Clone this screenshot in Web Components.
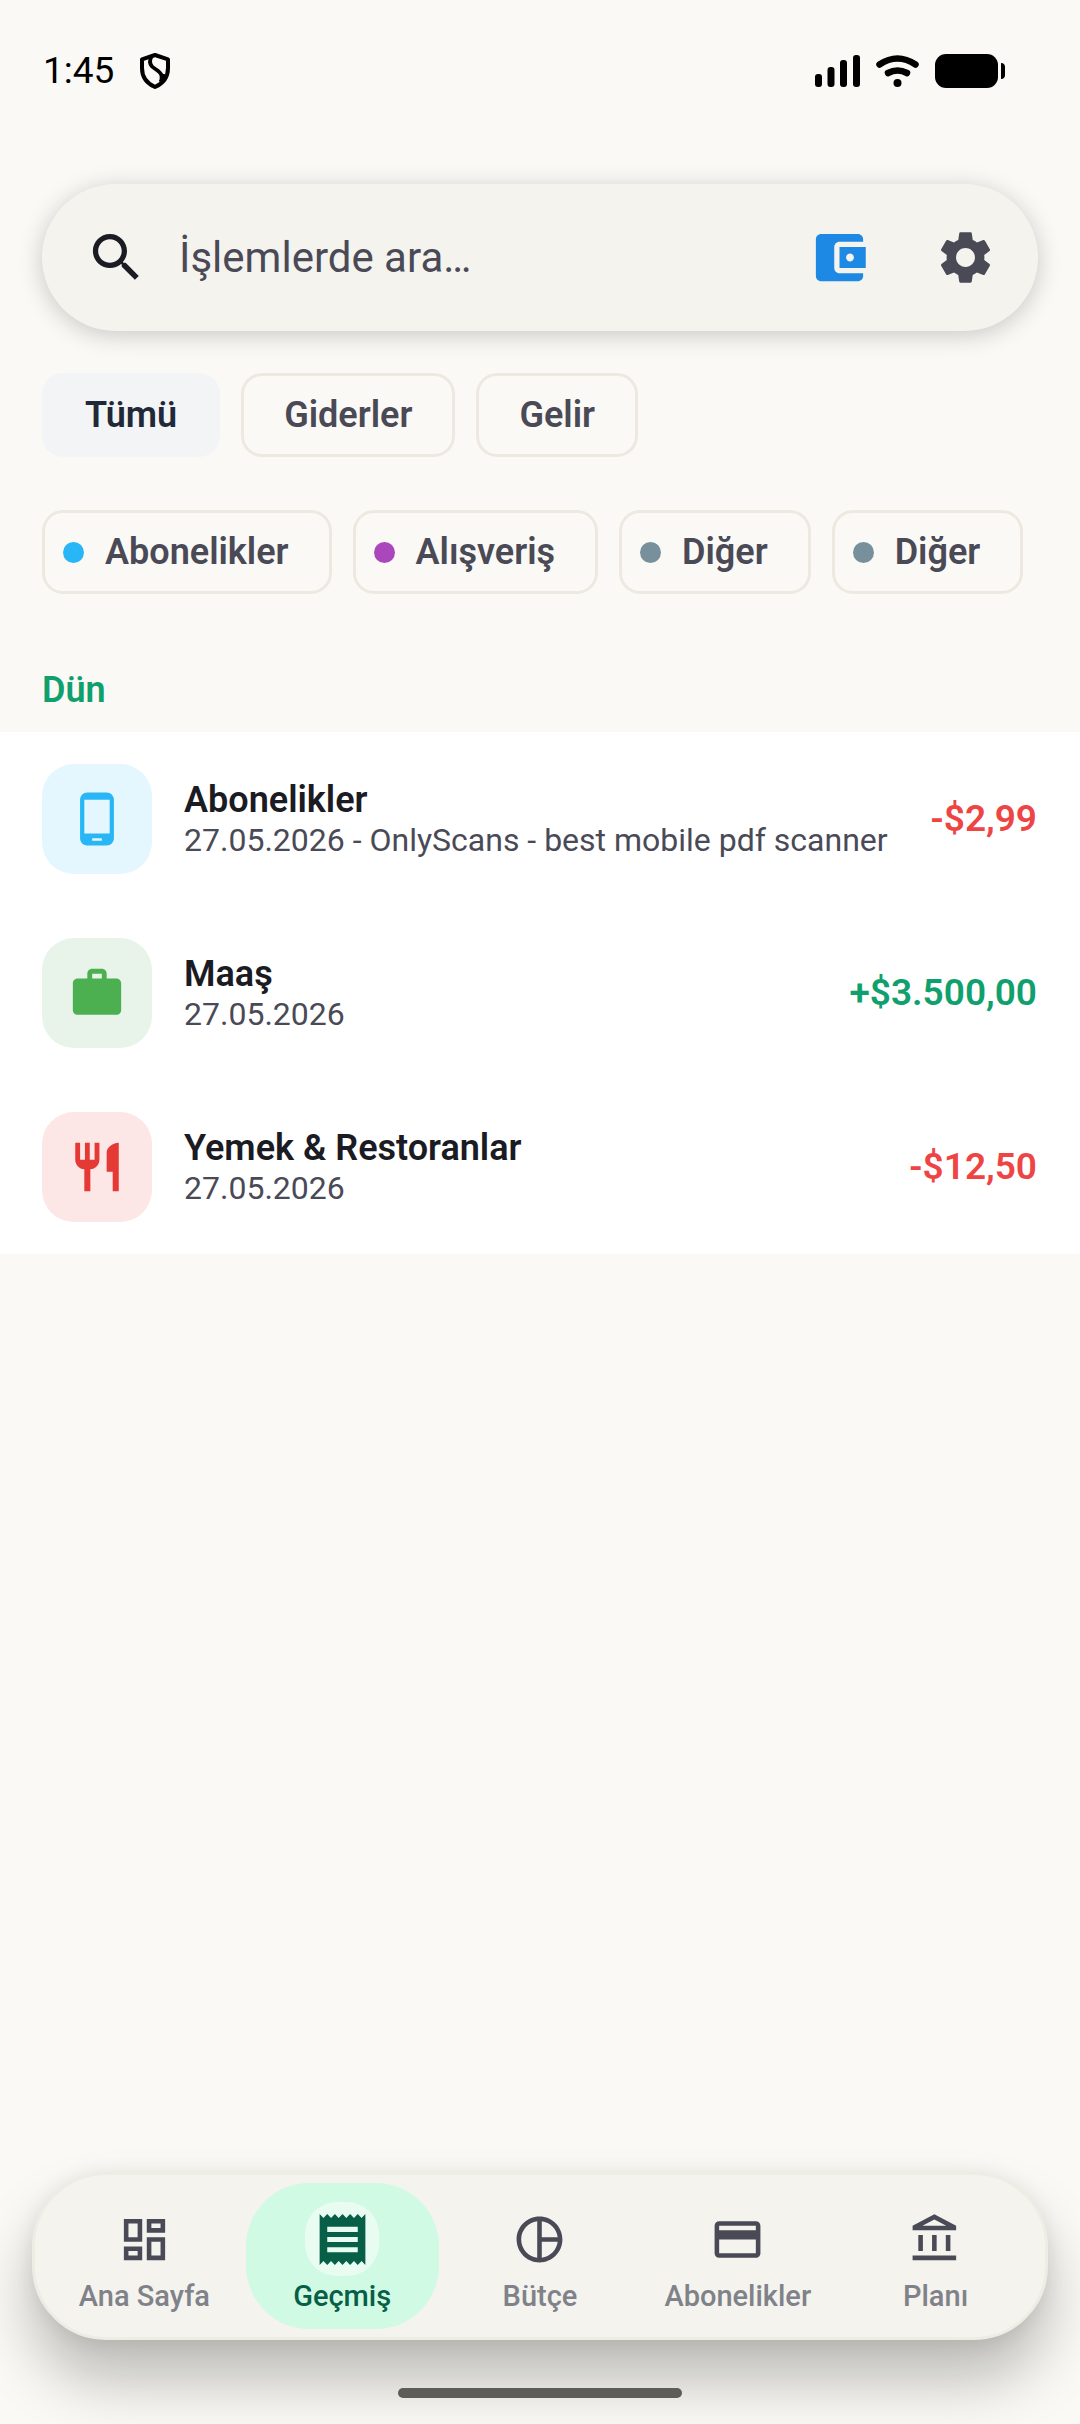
<!DOCTYPE html>
<html lang="tr">
<head>
<meta charset="utf-8">
<meta name="viewport" content="width=device-width, initial-scale=1">
<title>Geçmiş</title>
<style>
    html {
        --bg: #faf9f5;
        --bar: #f4f3ee;
        --ink: #1b1b23;
        --muted: #4a4a57;
        --line: #ede9e1;
        --income: #10a06d;
        --expense: #ef4444;
    }
    body {
        margin: 0;
        background: var(--bg);
        color: var(--ink);
        font-family: Roboto, "Noto Sans", sans-serif;
        font-size: 37px;
        line-height: 44px;
    }
</style>
</head>
<body>
<app-shell>
    <status-bar slot="top" time="1:45"></status-bar>
    <search-bar placeholder="İşlemlerde ara…"></search-bar>
    <chip-row>
        <filter-chip selected>Tümü</filter-chip>
        <filter-chip>Giderler</filter-chip>
        <filter-chip>Gelir</filter-chip>
    </chip-row>
    <chip-row>
        <filter-chip dot="#29b6f6">Abonelikler</filter-chip>
        <filter-chip dot="#ab47bc">Alışveriş</filter-chip>
        <filter-chip dot="#78909c">Diğer</filter-chip>
        <filter-chip dot="#78909c">Diğer</filter-chip>
    </chip-row>
    <transaction-group>
        <span slot="title">Dün</span>
        <transaction-item icon="phone" color="#29b6f6" tint="#e4f6fe" amount="-$2,99">
            Abonelikler
            <span slot="note">27.05.2026 - OnlyScans - best mobile pdf scanner</span>
        </transaction-item>
        <transaction-item icon="work" color="#4caf50" tint="#e8f4ea" amount="+$3.500,00">
            Maaş
            <span slot="note">27.05.2026</span>
        </transaction-item>
        <transaction-item icon="restaurant" color="#e53935" tint="#fce6e6" amount="-$12,50">
            Yemek &amp; Restoranlar
            <span slot="note">27.05.2026</span>
        </transaction-item>
    </transaction-group>
    <bottom-nav slot="bottom">
        <nav-item icon="dashboard" href="#home">Ana Sayfa</nav-item>
        <nav-item icon="receipt" href="#history" active>Geçmiş</nav-item>
        <nav-item icon="pie" href="#budget">Bütçe</nav-item>
        <nav-item icon="card" href="#subscriptions">Abonelikler</nav-item>
        <nav-item icon="bank" href="#plan">Planı</nav-item>
    </bottom-nav>
</app-shell>

<script>
const ICONS = {
    search: 'M15.5 14h-.79l-.28-.27C15.41 12.59 16 11.11 16 9.5 16 5.91 13.09 3 9.5 3S3 5.91 3 9.5 5.91 16 9.5 16c1.61 0 3.09-.59 4.23-1.57l.27.28v.79l5 4.99L20.49 19l-4.99-5zm-6 0C7.01 14 5 11.99 5 9.5S7.01 5 9.5 5 14 7.01 14 9.5 11.99 14 9.5 14z',
    wallet: 'M21 18v1c0 1.1-.9 2-2 2H5c-1.11 0-2-.9-2-2V5c0-1.1.89-2 2-2h14c1.1 0 2 .9 2 2v1h-9c-1.11 0-2 .9-2 2v8c0 1.1.89 2 2 2h9zm-9-2h10V8H12v8zm4-2.5c-.83 0-1.5-.67-1.5-1.5s.67-1.5 1.5-1.5 1.5.67 1.5 1.5-.67 1.5-1.5 1.5z',
    settings: 'M19.14 12.94c.04-.3.06-.61.06-.94 0-.32-.02-.64-.07-.94l2.03-1.58c.18-.14.23-.41.12-.61l-1.92-3.32c-.12-.22-.37-.29-.59-.22l-2.39.96c-.5-.38-1.03-.7-1.62-.94L14.4 2.81c-.04-.24-.24-.41-.48-.41h-3.84c-.24 0-.43.17-.47.41L9.25 5.35C8.66 5.59 8.12 5.92 7.63 6.29L5.24 5.33c-.22-.08-.47 0-.59.22L2.74 8.87c-.12.21-.08.47.12.61l2.03 1.58C4.84 11.36 4.8 11.69 4.8 12s.02.64.07.94l-2.03 1.58c-.18.14-.23.41-.12.61l1.92 3.32c.12.22.37.29.59.22l2.39-.96c.5.38 1.03.7 1.62.94l.36 2.54c.05.24.24.41.48.41h3.84c.24 0 .44-.17.47-.41l.36-2.54c.59-.24 1.13-.56 1.62-.94l2.39.96c.22.08.47 0 .59-.22l1.92-3.32c.12-.22.07-.47-.12-.61l-2.01-1.58zM12 15.6c-1.98 0-3.6-1.62-3.6-3.6s1.62-3.6 3.6-3.6 3.6 1.62 3.6 3.6-1.62 3.6-3.6 3.6z',
    phone: 'M16 1H8C6.34 1 5 2.34 5 4v16c0 1.66 1.34 3 3 3h8c1.66 0 3-1.34 3-3V4c0-1.66-1.34-3-3-3zm-2 20h-4v-1h4v1zm3.25-3H6.75V4h10.5v14z',
    work: 'M20 6h-4V4c0-1.11-.89-2-2-2h-4c-1.11 0-2 .89-2 2v2H4c-1.11 0-1.99.89-1.99 2L2 19c0 1.11.89 2 2 2h16c1.11 0 2-.89 2-2V8c0-1.11-.89-2-2-2zm-6 0h-4V4h4v2z',
    restaurant: 'M11 9H9V2H7v7H5V2H3v7c0 2.12 1.66 3.84 3.75 3.97V22h2.5v-9.03C11.34 12.84 13 11.12 13 9V2h-2v7zm5-3v8h2.5v8H21V2c-2.76 0-5 2.24-5 4z',
    dashboard: 'M19 5v2h-4V5h4M9 5v6H5V5h4m10 8v6h-4v-6h4M9 17v2H5v-2h4M21 3h-8v6h8V3zM11 3H3v10h8V3zm10 8h-8v10h8V11zm-10 4H3v6h8v-6z',
    receipt: 'M18 17H6v-2h12v2zm0-4H6v-2h12v2zm0-4H6V7h12v2zM3 22l1.5-1.5L6 22l1.5-1.5L9 22l1.5-1.5L12 22l1.5-1.5L15 22l1.5-1.5L18 22l1.5-1.5L21 22V2l-1.5 1.5L18 2l-1.5 1.5L15 2l-1.5 1.5L12 2l-1.5 1.5L9 2 7.5 3.5 6 2 4.5 3.5 3 2v20z',
    pie: 'M12 2C6.48 2 2 6.48 2 12s4.48 10 10 10 10-4.48 10-10S17.52 2 12 2zm1 2.07c3.61.45 6.48 3.33 6.93 6.93H13V4.07zM4 12c0-4.06 3.07-7.44 7-7.93v15.87c-3.93-.5-7-3.88-7-7.94zm9 7.93V13h6.93c-.45 3.61-3.32 6.48-6.93 6.93z',
    card: 'M20 4H4c-1.11 0-1.99.89-1.99 2L2 18c0 1.11.89 2 2 2h16c1.11 0 2-.89 2-2V6c0-1.11-.89-2-2-2zm0 14H4v-6h16v6zm0-10H4V6h16v2z',
    bank: 'M6.5 10h-2v7h2v-7zm6 0h-2v7h2v-7zm8.5 9H2v2h19v-2zm-2.5-9h-2v7h2v-7zm-7-6.74L16.71 6H6.29l5.21-2.74m0-2.26L2 6v2h19V6l-9.5-5z'
};

const icon = name => `<svg viewBox="0 0 24 24" aria-hidden="true"><path fill="currentColor" d="${ICONS[name]}"/></svg>`;

class AppShell extends HTMLElement {
    constructor() {
        super();
        this.attachShadow({ mode: 'open' });
    }

    connectedCallback() {
        this.shadowRoot.innerHTML = `
            <style>
                :host {
                    display: flex;
                    flex-direction: column;
                    min-height: 100vh;
                }
                main {
                    flex: 1;
                    min-width: 0;
                }
            </style>
            <slot name="top"></slot>
            <main><slot></slot></main>
            <slot name="bottom"></slot>
        `;
    }
}

class StatusBar extends HTMLElement {
    constructor() {
        super();
        this.attachShadow({ mode: 'open' });
    }

    connectedCallback() {
        this.shadowRoot.innerHTML = `
            <style>
                :host {
                    display: flex;
                    align-items: center;
                    justify-content: space-between;
                    padding: 49px 74px 39px 43px;
                    color: #000;
                }
                div {
                    display: flex;
                    align-items: center;
                    gap: 16px;
                }
                .left {
                    gap: 26px;
                }
                svg {
                    display: block;
                }
            </style>
            <div class="left">
                <span>${this.getAttribute('time')}</span>
                <svg width="30" height="36" viewBox="0 0 30 36" fill="none" stroke="#000" stroke-linejoin="round" aria-hidden="true">
                    <path stroke-width="4" d="M15 2 28 6.300V15C28 24 23 30.500 15 34 7 30.500 2 24 2 15V6.300Z"/>
                    <path stroke-width="3.800" d="M12 3C9.500 6.500 9.500 10.500 12 13.500 15 16.500 20.500 18 21.500 22.500 22 25 21.500 27 20.500 29"/>
                    <path fill="#000" d="M22 21 25.500 22 22 28Z"/>
                </svg>
            </div>
            <div>
                <svg width="45" height="34" viewBox="0 0 45 34" aria-hidden="true">
                    <rect y="20" width="7" height="13" rx="3"/>
                    <rect x="12.500" y="13" width="7" height="20" rx="3"/>
                    <rect x="25" y="6" width="7" height="27" rx="3"/>
                    <rect x="38" y="1" width="7" height="32" rx="3"/>
                </svg>
                <svg width="43" height="34" viewBox="0 0 43 34" fill="none" stroke="#000" stroke-width="6.500" stroke-linecap="round" aria-hidden="true">
                    <path d="M3.500 10.500Q21.500-1.500 39.500 10.500"/>
                    <path d="M12 19Q21.500 14 31 19"/>
                    <circle cx="21.500" cy="29" r="4" fill="#000" stroke="none"/>
                </svg>
                <svg width="71" height="34" viewBox="0 0 71 34" aria-hidden="true">
                    <rect width="63" height="34" rx="11"/>
                    <path d="M66 9c3 0 4 2 4 4v8c0 2-1 4-4 4z"/>
                </svg>
            </div>
        `;
    }
}

class SearchBar extends HTMLElement {
    constructor() {
        super();
        this.attachShadow({ mode: 'open' });
    }

    connectedCallback() {
        const text = this.getAttribute('placeholder');
        this.shadowRoot.innerHTML = `
            <style>
                :host {
                    display: flex;
                    align-items: center;
                    margin: 52px 42px 0;
                    padding: 0 10px 0 43px;
                    border-radius: 74px;
                    background: var(--bar);
                    box-shadow: 0 4px 24px rgba(0, 0, 0, 0.2);
                }
                svg {
                    display: block;
                    width: 63px;
                    height: 63px;
                }
                input {
                    flex: 1;
                    min-width: 0;
                    height: 147px;
                    margin-left: 31px;
                    padding: 0;
                    border: 0;
                    outline: 0;
                    background: none;
                    color: var(--ink);
                    font: inherit;
                    font-size: 42px;
                }
                input::placeholder {
                    color: var(--muted);
                    opacity: 1;
                }
                button {
                    display: grid;
                    place-items: center;
                    width: 126px;
                    height: 126px;
                    padding: 0;
                    border: 0;
                    background: none;
                    color: var(--muted);
                }
                .wallet {
                    color: #1e88e5;
                }
            </style>
            ${icon('search')}
            <input type="search" aria-label="${text}" placeholder="${text}">
            <button class="wallet" aria-label="Cüzdan">${icon('wallet')}</button>
            <button aria-label="Ayarlar">${icon('settings')}</button>
        `;
    }
}

class ChipRow extends HTMLElement {
    constructor() {
        super();
        this.attachShadow({ mode: 'open' });
    }

    connectedCallback() {
        this.shadowRoot.innerHTML = `
            <style>
                :host {
                    display: flex;
                    gap: 21px;
                    margin-top: 42px;
                    padding: 0 42px;
                    overflow: hidden;
                }
                :host(:nth-of-type(2)) {
                    margin-top: 53px;
                }
            </style>
            <slot></slot>
        `;
    }
}

class FilterChip extends HTMLElement {
    constructor() {
        super();
        this.attachShadow({ mode: 'open' });
    }

    connectedCallback() {
        const dot = this.getAttribute('dot');
        this.shadowRoot.innerHTML = `
            <style>
                :host {
                    display: block;
                    flex: none;
                }
                button {
                    display: flex;
                    align-items: center;
                    gap: 21px;
                    height: 84px;
                    padding: 0 40px;
                    border: 3px solid var(--line);
                    border-radius: 21px;
                    background: none;
                    color: var(--muted);
                    font: inherit;
                    font-size: 36px;
                    font-weight: 600;
                }
                .with-dot {
                    padding-left: 18px;
                }
                i {
                    width: 21px;
                    height: 21px;
                    border-radius: 50%;
                    background: ${dot};
                }
                :host([selected]) button {
                    border-color: #f3f4f6;
                    background: #f3f4f6;
                    color: #1f2937;
                }
            </style>
            <button class="${dot ? 'with-dot' : ''}" aria-pressed="${this.hasAttribute('selected')}">
                ${dot ? '<i></i>' : ''}<slot></slot>
            </button>
        `;
    }
}

class TransactionGroup extends HTMLElement {
    constructor() {
        super();
        this.attachShadow({ mode: 'open' });
    }

    connectedCallback() {
        this.shadowRoot.innerHTML = `
            <style>
                :host {
                    display: block;
                }
                h2 {
                    margin: 0;
                    padding: 74px 42px 20px;
                    color: var(--income);
                    font-size: 36px;
                    font-weight: 600;
                }
                .rows {
                    background: #fff;
                }
            </style>
            <h2><slot name="title"></slot></h2>
            <div class="rows" role="list"><slot></slot></div>
        `;
    }
}

class TransactionItem extends HTMLElement {
    constructor() {
        super();
        this.attachShadow({ mode: 'open' });
    }

    connectedCallback() {
        const amount = this.getAttribute('amount');
        this.setAttribute('role', 'listitem');
        this.shadowRoot.innerHTML = `
            <style>
                :host {
                    display: flex;
                    align-items: center;
                    gap: 32px;
                    padding: 32px 43px 32px 42px;
                }
                .tile {
                    display: grid;
                    flex: none;
                    place-items: center;
                    width: 110px;
                    height: 110px;
                    border-radius: 32px;
                    background: ${this.getAttribute('tint')};
                    color: ${this.getAttribute('color')};
                }
                svg {
                    width: 58px;
                    height: 58px;
                }
                .text {
                    flex: 1;
                    min-width: 0;
                }
                .name {
                    font-size: 36px;
                    font-weight: 600;
                    line-height: 43px;
                }
                .note {
                    color: var(--muted);
                    font-size: 32px;
                    line-height: 37px;
                    white-space: nowrap;
                }
                .amount {
                    color: var(${amount.startsWith('+') ? '--income' : '--expense'});
                    font-weight: 600;
                    line-height: 46px;
                }
            </style>
            <div class="tile">${icon(this.getAttribute('icon'))}</div>
            <div class="text">
                <div class="name"><slot></slot></div>
                <div class="note"><slot name="note"></slot></div>
            </div>
            <div class="amount">${amount}</div>
        `;
    }
}

class BottomNav extends HTMLElement {
    constructor() {
        super();
        this.attachShadow({ mode: 'open' });
    }

    connectedCallback() {
        this.shadowRoot.innerHTML = `
            <style>
                :host {
                    display: block;
                    overflow: hidden;
                    padding: 40px 32px 26px;
                }
                nav {
                    display: flex;
                    gap: 5px;
                    padding: 8px 13px;
                    border: 3px solid #eeede3;
                    border-radius: 74px;
                    background: var(--bar);
                    box-shadow: 0 40px 60px rgba(0, 0, 0, 0.25), 0 2px 20px rgba(0, 0, 0, 0.08);
                }
                .home {
                    position: relative;
                    width: 284px;
                    height: 10px;
                    margin: 48px auto 0;
                    border-radius: 5px;
                    background: #5c5c58;
                }
            </style>
            <nav><slot></slot></nav>
            <div class="home"></div>
        `;
    }
}

class NavItem extends HTMLElement {
    constructor() {
        super();
        this.attachShadow({ mode: 'open' });
    }

    connectedCallback() {
        this.shadowRoot.innerHTML = `
            <style>
                :host {
                    display: block;
                    flex: 1 1 0;
                    min-width: 0;
                }
                a {
                    display: flex;
                    flex-direction: column;
                    align-items: center;
                    gap: 3px;
                    padding: 19px 0 16px;
                    border-radius: 63px;
                    color: #808289;
                    font-size: 29px;
                    font-weight: 500;
                    line-height: 34px;
                    text-decoration: none;
                    white-space: nowrap;
                }
                .icon {
                    display: grid;
                    place-items: center;
                    width: 74px;
                    height: 74px;
                    border-radius: 32px;
                    color: var(--muted);
                }
                svg {
                    width: 55px;
                    height: 55px;
                }
                :host([active]) a {
                    background: #d1fae5;
                    color: #065f46;
                }
                :host([active]) .icon {
                    background: #e8fcf2;
                    color: inherit;
                }
                :host([active]) svg {
                    width: 61px;
                    height: 61px;
                }
            </style>
            <a href="${this.getAttribute('href')}"${this.hasAttribute('active') ? ' aria-current="page"' : ''}>
                <span class="icon">${icon(this.getAttribute('icon'))}</span>
                <slot></slot>
            </a>
        `;
    }
}

customElements.define('app-shell', AppShell);
customElements.define('status-bar', StatusBar);
customElements.define('search-bar', SearchBar);
customElements.define('chip-row', ChipRow);
customElements.define('filter-chip', FilterChip);
customElements.define('transaction-group', TransactionGroup);
customElements.define('transaction-item', TransactionItem);
customElements.define('bottom-nav', BottomNav);
customElements.define('nav-item', NavItem);
</script>
</body>
</html>
